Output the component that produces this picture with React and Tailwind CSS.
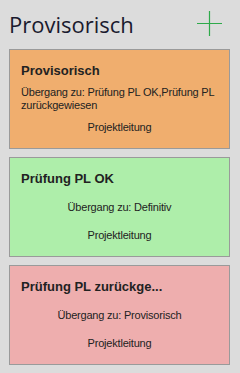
import React from "react";

const STATES = [
  {
    title: "Provisorisch",
    transition: "Übergang zu: Prüfung PL OK,Prüfung PL zurückgewiesen",
    role: "Projektleitung",
    color: "bg-[#f0ae6e]",
    left: true,
  },
  {
    title: "Prüfung PL OK",
    transition: "Übergang zu: Definitiv",
    role: "Projektleitung",
    color: "bg-[#aeeeaa]",
  },
  {
    title: "Prüfung PL zurückge...",
    transition: "Übergang zu: Provisorisch",
    role: "Projektleitung",
    color: "bg-[#eeaeae]",
  },
];

const StateCard = ({ state }) => (
  <div
    className={`h-[100px] border border-[#9a9a9a] ${state.color} px-[11px] text-[#222] flex flex-col`}
    style={{ fontFamily: "Tahoma, 'Liberation Sans', Arial, sans-serif" }}
  >
    <div className="mt-[13px] text-[13px] font-bold leading-[16px] whitespace-nowrap">
      {state.title}
    </div>
    {state.left ? (
      <div className="mt-[7px] text-[11px] leading-[13px] tracking-[-0.2px]">{state.transition}</div>
    ) : (
      <div className="mt-[14px] text-[11px] leading-[13px] tracking-[-0.2px] text-center">
        {state.transition}
      </div>
    )}
    <div
      className={`text-[11px] leading-[13px] tracking-[-0.2px] text-center ${
        state.left ? "mt-[9px]" : "mt-[15px]"
      }`}
    >
      {state.role}
    </div>
  </div>
);

export default function App() {
  return (
    <div className="w-[240px] h-[373px] bg-[#dcdcdc] overflow-hidden">
      <div className="flex items-center justify-between pl-[9px] pr-[17px] h-[49px] pb-[2px]">
        <h1
          className="text-[22px] leading-[28px] text-[#1a1a2e] whitespace-nowrap"
          style={{ fontFamily: "'Open Sans', 'Noto Sans', sans-serif" }}
        >
          Provisorisch
        </h1>
        <svg width="27" height="27" viewBox="0 0 27 27">
          <path d="M13.5 1 V26 M1 13.5 H26" stroke="#2eaa4a" strokeWidth="1.2" />
        </svg>
      </div>
      <div className="flex flex-col gap-[8px] pl-[9px] pr-[10px]">
        {STATES.map((s) => (
          <StateCard key={s.title} state={s} />
        ))}
      </div>
    </div>
  );
}
